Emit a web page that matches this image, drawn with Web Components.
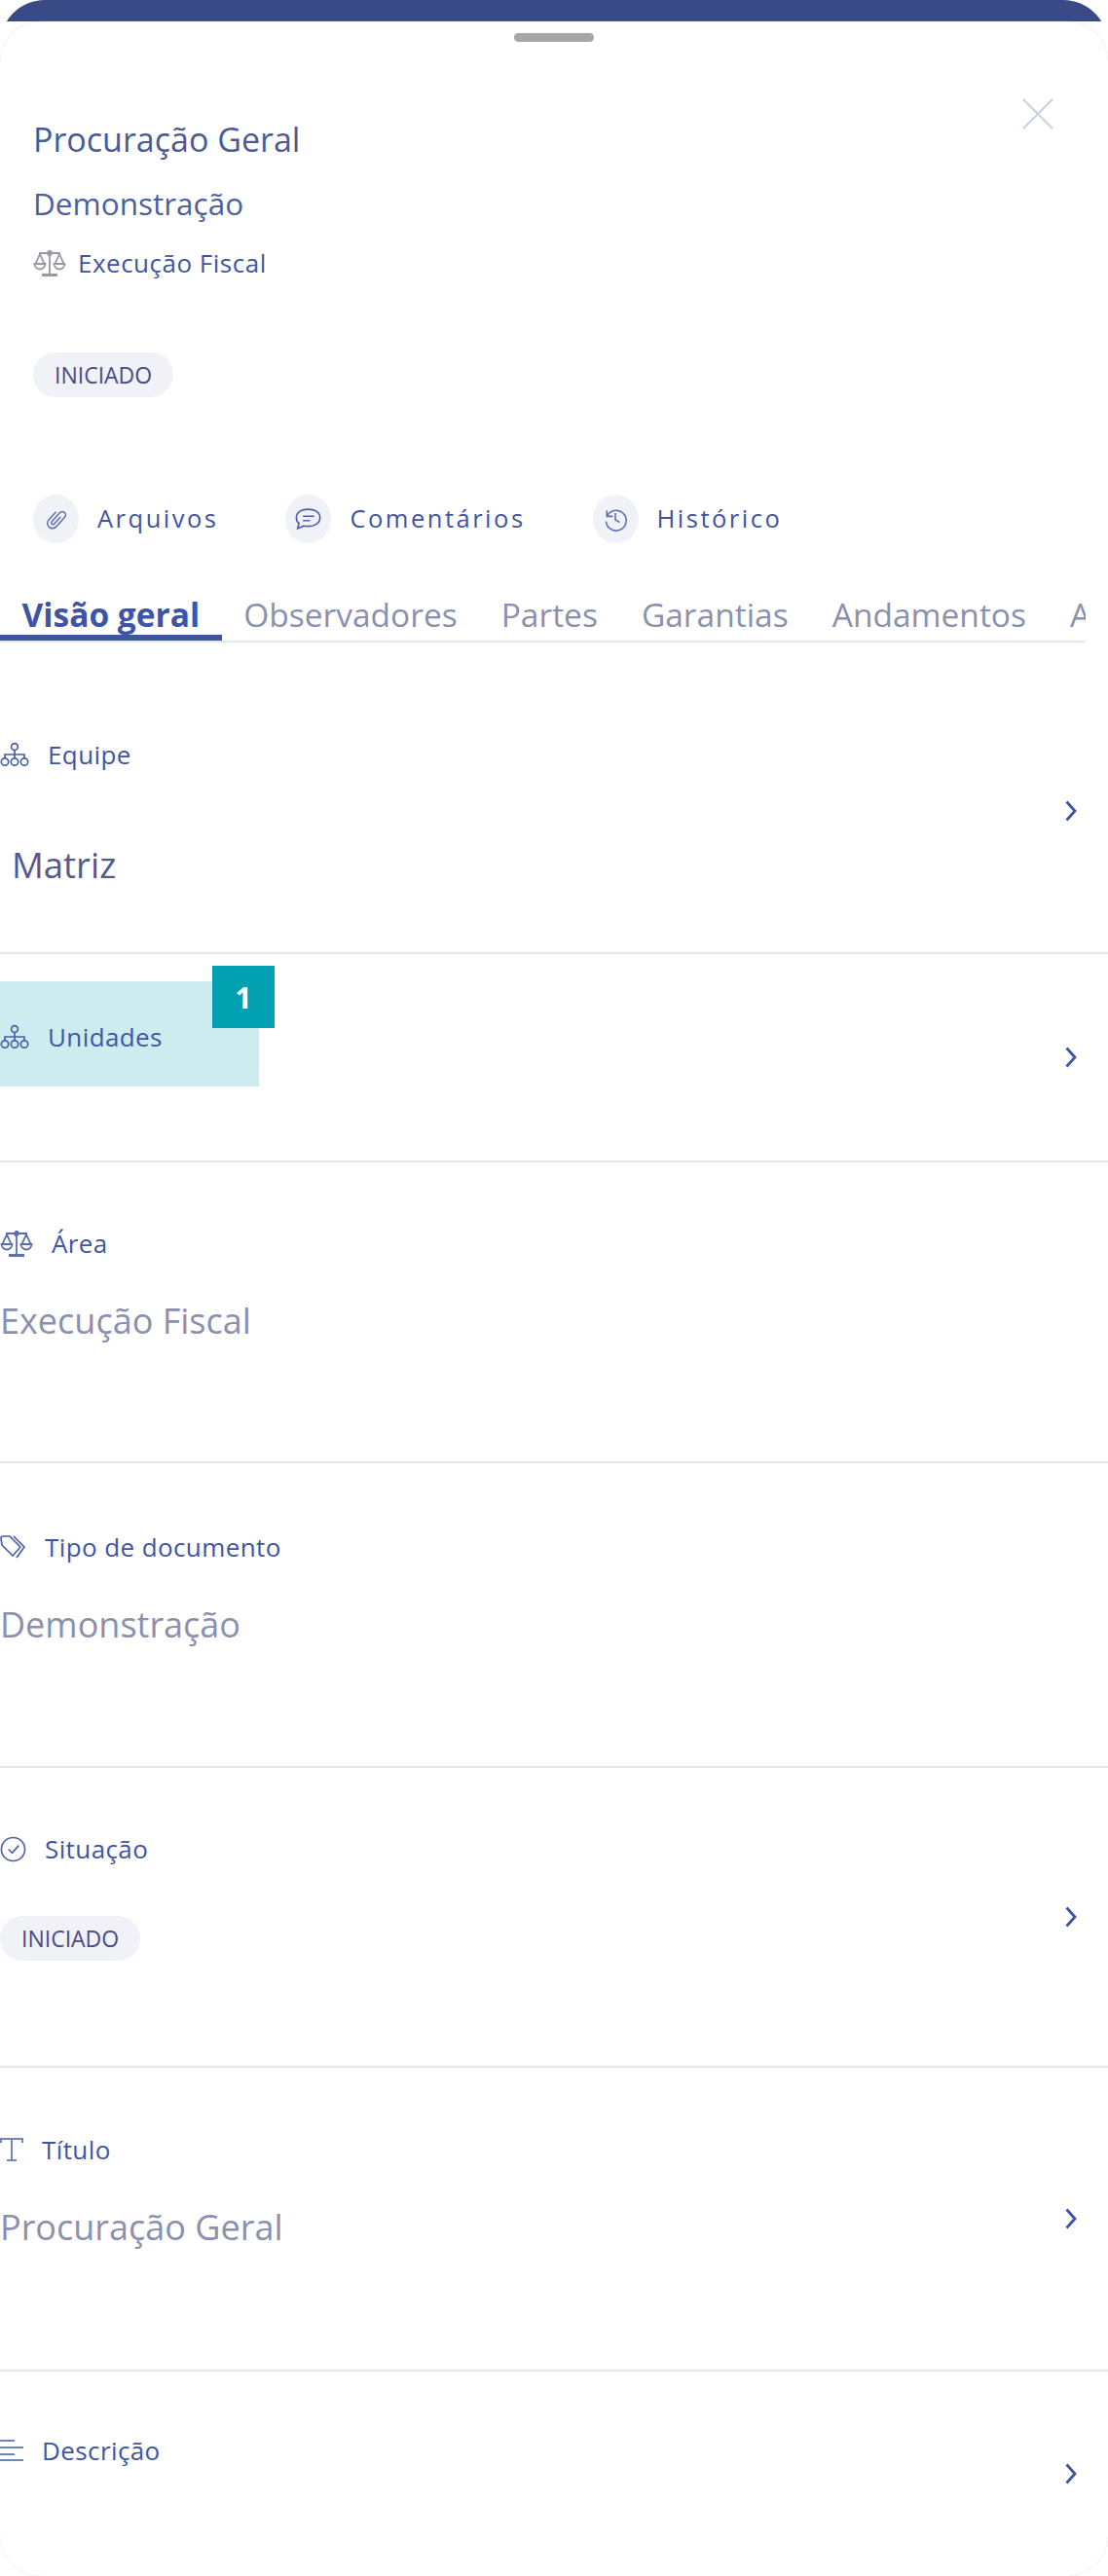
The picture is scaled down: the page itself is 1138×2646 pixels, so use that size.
<!DOCTYPE html>
<html lang="pt">
<head>
<meta charset="utf-8">
<title>Procuração Geral</title>
<style>
html,body{margin:0;padding:0;background:#fff;}
body{font-family:"Open Sans",sans-serif;width:1138px;height:2646px;overflow:hidden;}
</style>
</head>
<body>
<doc-sheet>
  <doc-header title="Procuração Geral" subtitle="Demonstração" area="Execução Fiscal" status="INICIADO"></doc-header>
  <doc-actions></doc-actions>
  <doc-tabs></doc-tabs>
  <doc-row label="Equipe" icon="org" chevron style="--h:292px;--pt:70px">
    <span style="display:block;margin:72px 0 0 12px;font-size:36.500px;line-height:48px;color:#52598c">Matriz</span>
  </doc-row>
  <doc-row label="Unidades" icon="org" chevron highlight style="--h:214px;--pt:68px"></doc-row>
  <doc-row label="Área" icon="scale" value="Execução Fiscal" style="--h:309px;--pt:66px"></doc-row>
  <doc-row label="Tipo de documento" icon="tag" value="Demonstração" style="--h:313px;--pt:69px"></doc-row>
  <doc-row label="Situação" icon="check" chevron style="--h:308px;--pt:66px">
    <status-pill style="margin-top:52px">INICIADO</status-pill>
  </doc-row>
  <doc-row label="Título" icon="text" value="Procuração Geral" chevron style="--h:312px;--pt:67px"></doc-row>
  <doc-row label="Descrição" icon="lines" chevron last style="--h:210px;--pt:64px"></doc-row>
</doc-sheet>

<script>
const icons = {
  org: `<svg width="30" height="26" viewBox="0 0 30 26" fill="none" stroke="#4a5fa8" stroke-width="1.7"><circle cx="15" cy="5" r="3.4"/><path d="M15 8.500V13M5 17v-4h20v4M15 13v4"/><circle cx="5" cy="20.500" r="3.700"/><circle cx="15" cy="20.500" r="3.700"/><circle cx="25" cy="20.500" r="3.700"/></svg>`,
  scale: `<svg width="34" height="28" viewBox="0 0 34 28" fill="none" stroke="currentColor" stroke-width="1.800"><path d="M17 1v24M6 4h22"/><path d="M9 26.500h16" stroke-width="3"/><circle cx="17" cy="4" r="2"/><path d="M7 5 2.500 15h9zM27 5l-4.500 10h9z"/><path d="M1.500 15a5.500 5.500 0 0 0 11 0zM21.500 15a5.500 5.500 0 0 0 11 0z"/></svg>`,
  tag: `<svg width="27" height="25" viewBox="0 0 27 25" fill="none" stroke="#4a5fa8" stroke-width="1.700" stroke-linejoin="round"><path d="M1 3q0-2 2-2h7l11 11-8 9L2 10z"/><path d="M14 1l11 11-8 11"/></svg>`,
  check: `<svg width="27" height="27" viewBox="0 0 28 28" fill="none" stroke="#4a5fa8" stroke-width="1.700"><circle cx="14" cy="14" r="12.500"/><path d="M9 14l4 4 7-8"/></svg>`,
  text: `<svg width="24" height="24" viewBox="0 0 24 24" fill="none" stroke="#7286bd" stroke-width="2"><path d="M1 5V1h22v4M12 1v22M7 23h10"/></svg>`,
  lines: `<svg width="24" height="24" viewBox="0 0 24 24" fill="none" stroke="#6f83bb" stroke-width="2"><path d="M0 2h15M0 9h24M0 16h15M0 22h24"/></svg>`,
  clip: `<svg width="26" height="26" viewBox="0 0 24 24" fill="none" stroke="#5a6fb0" stroke-width="1.700"><g transform="translate(12 12) rotate(42) scale(.8) translate(-10 -13)"><path d="M12 8v11a2 2 0 0 1-4 0V5a4 4 0 0 1 8 0v15a6 6 0 0 1-12 0V7"/></g></svg>`,
  chat: `<svg width="27" height="24" viewBox="0 0 30 26" fill="none" stroke="#4a5fa8" stroke-width="1.800"><path d="M15 2C8 2 1.500 5 1.500 11.500c0 3 1 5 3 6.500L3 24l7-3c2 .5 3 .5 5 .5 7 0 13.500-3.500 13.500-10S22 2 15 2z"/><path d="M9 10h13M9 15h8"/></svg>`,
  history: `<svg width="26" height="26" viewBox="0 0 30 30" fill="none" stroke="#5a6fb0" stroke-width="1.800"><path d="M5 5v7h7"/><path d="M5 12a12 12 0 1 1-1 6"/><path d="M15 8v8l5 3"/></svg>`
};

customElements.define('status-pill', class extends HTMLElement {
  constructor() {
    super();
    this.attachShadow({ mode: 'open' }).innerHTML = `
    <style>
      :host{display:inline-block;background:#f1f2f8;border-radius:24px;height:46px;line-height:46px;padding:0 22px;font-size:23px;color:#4a4a86;}
    </style>
    <slot></slot>`;
  }
});

customElements.define('doc-sheet', class extends HTMLElement {
  constructor() {
    super();
    this.attachShadow({ mode: 'open' }).innerHTML = `
    <style>
      :host{display:block;width:1138px;height:2646px;overflow:hidden;position:relative;}
      .bar{height:22px;overflow:hidden;}
      .bar::before{content:"";display:block;height:120px;background:#3a4a87;border-radius:46px;}
      .sheet{height:2624px;background:#fff;border-radius:42px;box-shadow:0 0 1px #c5c8d6;position:relative;}
      .handle{width:82px;height:9px;border-radius:5px;background:#a7a5a6;margin:0 auto;position:relative;top:12px;}
    </style>
    <div class="bar"></div>
    <div class="sheet"><div class="handle"></div><slot></slot></div>`;
  }
});

customElements.define('doc-header', class extends HTMLElement {
  constructor() {
    super();
    const t = this.getAttribute('title'), s = this.getAttribute('subtitle');
    const a = this.getAttribute('area'), st = this.getAttribute('status');
    this.removeAttribute('title');
    this.attachShadow({ mode: 'open' }).innerHTML = `
    <style>
      :host{display:block;position:relative;height:477px;padding:0 0 0 34px;box-sizing:border-box;}
      .close{position:absolute;right:56px;top:70px;width:32px;height:32px;}
      h1{margin:0;padding-top:88px;font-size:34px;line-height:48px;font-weight:400;color:#4a5a96;}
      h2{margin:18px 0 0;font-size:31.500px;line-height:48px;font-weight:400;color:#4f5f9c;}
      .area{display:flex;align-items:center;gap:12px;margin-top:19px;height:36px;font-size:26px;letter-spacing:.5px;color:#3f55a3;}
      .area span{display:flex;color:#9a98a2;}
      status-pill{margin-top:74px;}
    </style>
    <svg class="close" viewBox="0 0 32 32" stroke="#c8cfe0" stroke-width="2" fill="none"><path d="M1 1l30 30M31 1 1 31"/></svg>
    <h1>${t}</h1>
    <h2>${s}</h2>
    <div class="area"><span>${icons.scale}</span>${a}</div>
    <status-pill>${st}</status-pill>`;
  }
});

customElements.define('doc-actions', class extends HTMLElement {
  constructor() {
    super();
    const items = [['clip', 'Arquivos'], ['chat', 'Comentários'], ['history', 'Histórico']];
    this.attachShadow({ mode: 'open' }).innerHTML = `
    <style>
      :host{display:flex;gap:69px;padding-left:34px;height:50px;}
      .act{display:flex;align-items:center;gap:19px;font-size:25.500px;letter-spacing:2.500px;line-height:48px;color:#3f55a3;}
      .ic{width:47px;height:50px;border-radius:50%;background:#f1f2f8;display:flex;align-items:center;justify-content:center;}
    </style>
    ${items.map(i => `<div class="act"><span class="ic">${icons[i[0]]}</span><span style="margin-top:-2px">${i[1]}</span></div>`).join('')}`;
  }
});

customElements.define('doc-tabs', class extends HTMLElement {
  constructor() {
    super();
    const tabs = ['Visão geral', 'Observadores', 'Partes', 'Garantias', 'Andamentos', 'Arquivos'];
    this.attachShadow({ mode: 'open' }).innerHTML = `
    <style>
      :host{display:flex;width:1115px;height:52px;margin:48px 0 28px;overflow:hidden;border-bottom:2px solid #e3e6ef;font-size:33.500px;}
      .tab{flex:none;padding:0 22.500px;line-height:50px;height:52px;box-sizing:border-box;color:#8b90ae;white-space:nowrap;}
      .tab.on{font-weight:700;color:#3f55a3;border-bottom:6px solid #3f55a3;}
    </style>
    ${tabs.map((t, i) => `<div class="tab${i ? '' : ' on'}">${t}</div>`).join('')}`;
  }
});

customElements.define('doc-row', class extends HTMLElement {
  constructor() {
    super();
    const label = this.getAttribute('label'), value = this.getAttribute('value');
    const hl = this.hasAttribute('highlight');
    this.attachShadow({ mode: 'open' }).innerHTML = `
    <style>
      :host{display:flex;justify-content:space-between;align-items:center;box-sizing:border-box;height:var(--h);border-bottom:2px solid #e6e7ec;}
      :host([last]){border-bottom:none;}
      .main{align-self:flex-start;padding-top:var(--pt);flex:1;position:relative;}
      .label{display:flex;align-items:center;gap:19px;height:34px;font-size:26px;letter-spacing:.4px;color:#3f55a3;position:relative;}
      .label svg{flex:none;color:#5a6fb0;}
      .value{margin-top:40px;font-size:36px;line-height:46px;color:#8b90ae;}
      .hl{position:absolute;left:0;top:28px;width:266px;height:108px;background:#cdecf0;}
      .badge{position:absolute;left:218px;top:12px;width:64px;height:64px;background:#01a1b2;color:#fff;font-weight:700;font-size:30px;display:flex;align-items:center;justify-content:center;}
      .chev{width:12px;height:22px;margin-right:32px;flex:none;}
    </style>
    <div class="main">
      ${hl ? '<div class="hl"></div><div class="badge">1</div>' : ''}
      <div class="label">${icons[this.getAttribute('icon')]}${label}</div>
      ${value ? `<div class="value">${value}</div>` : ''}
      <slot></slot>
    </div>
    ${this.hasAttribute('chevron') ? '<svg class="chev" viewBox="0 0 12 22" fill="none" stroke="#3f55a3" stroke-width="2.800"><path d="M1.500 1.500 10 11l-8.500 9.500"/></svg>' : ''}`;
  }
});
</script>
</body>
</html>
